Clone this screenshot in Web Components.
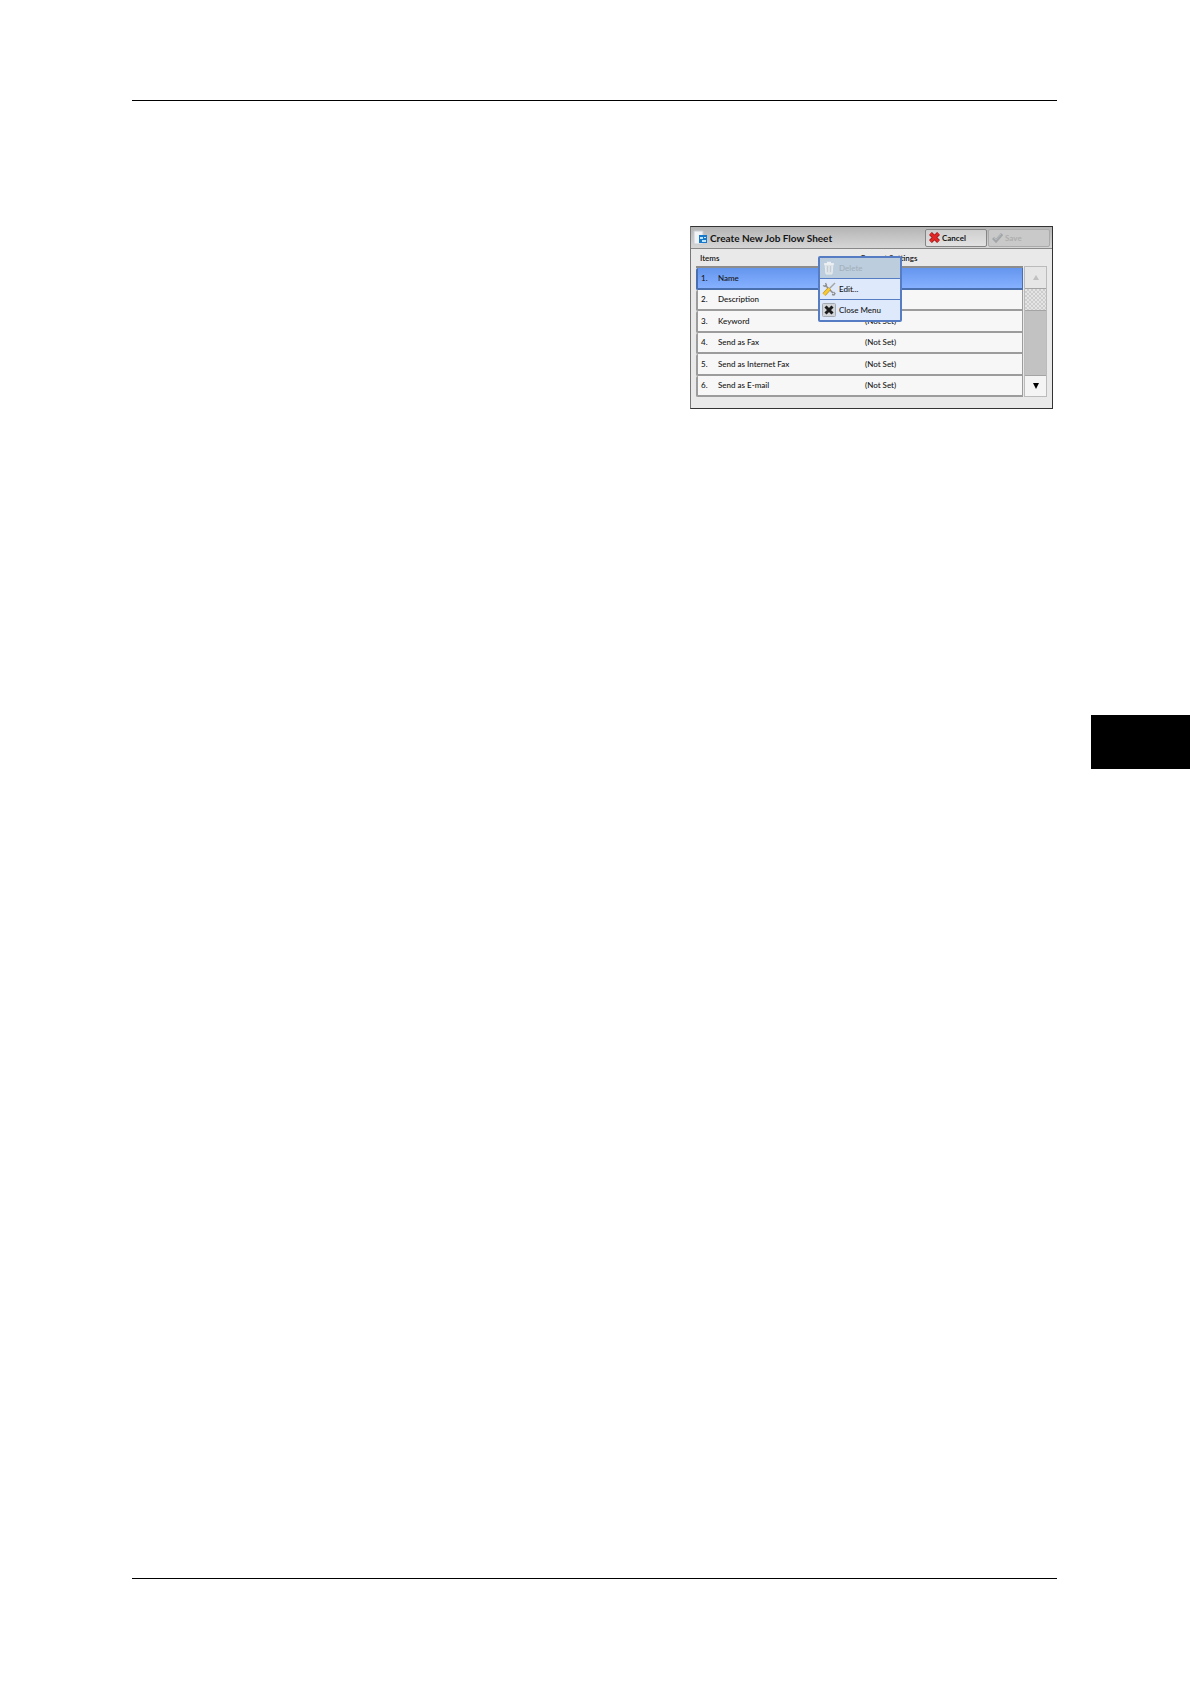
<!DOCTYPE html>
<html lang="en">
<head>
<meta charset="utf-8">
<title>Create New Job Flow Sheet</title>
<style>
body {
  margin: 0;
  background: white;
}
</style>
</head>
<body>
<manual-page>
  <flow-panel heading="Create New Job Flow Sheet">
    <tool-button slot="actions" icon="cancel">Cancel</tool-button>
    <tool-button slot="actions" icon="save" disabled>Save</tool-button>
    <item-list></item-list>
    <scroll-strip></scroll-strip>
    <popup-menu slot="popup"></popup-menu>
  </flow-panel>
</manual-page>

<script>
const icons = {
  sheet: `<svg width="15" height="16" viewBox="0 0 15 16">
    <path d="M1 1h9v13H1z" fill="#f1f3f6" stroke="#c9ced4"/>
    <path d="M6 5h8v8H6z" fill="#1879c9"/>
    <path d="M7 7h3v2H7zM11 7h2v1h-2zM9 10h4v2H9z" fill="#bfe6ff"/>
  </svg>`,
  cancel: `<svg width="11" height="11" viewBox="0 0 11 11">
    <path d="M1.500 1.500l8 8M9.500 1.500l-8 8" stroke="#8d1717" stroke-width="4"/>
    <path d="M1.500 1.500l8 8M9.500 1.500l-8 8" stroke="#e32626" stroke-width="2.800"/>
  </svg>`,
  save: `<svg width="11" height="11" viewBox="0 0 11 11">
    <path d="M1 6l3 3 6-7" fill="none" stroke="#a2a6a8" stroke-width="3"/>
    <path d="M2 6l2 2 5-6" fill="none" stroke="#b9bcbe" stroke-width="1"/>
  </svg>`,
  trash: `<svg width="14" height="14" viewBox="0 0 14 14">
    <path d="M3 3h8l-1 10H4z" fill="#dce2e6" stroke="#e9edef"/>
    <path d="M2 3h10M5 1.500h4" stroke="#eef1f3" stroke-width="1.500"/>
    <path d="M5.500 5v6M8.500 5v6" stroke="#c4ced6"/>
  </svg>`,
  edit: `<svg width="14" height="14" viewBox="0 0 14 14">
    <path d="M3 3l8 8" stroke="#8d8f91" stroke-width="1.600"/>
    <path d="M1 3.500l2 1 1.500-1.500L3.500 1M10 12.500l2 .5 1-1.500-1.500-1.500" fill="none" stroke="#8d8f91" stroke-width="1.300"/>
    <path d="M13 1L7 7" stroke="#a3a5a4" stroke-width="1.500"/>
    <path d="M7.500 6.500L2 12.500" stroke="#b68d16" stroke-width="4"/>
    <path d="M7.500 6.500L2 12.500" stroke="#f5c937" stroke-width="2.600"/>
  </svg>`,
  close: `<svg width="14" height="14" viewBox="0 0 14 14">
    <rect x=".5" y=".5" width="13" height="13" rx="1" fill="#d3d6d9" stroke="#a5abb2"/>
    <path d="M3.500 3.500l7 7M10.500 3.500l-7 7" stroke="#1c1c1c" stroke-width="3"/>
  </svg>`
};

class ManualPage extends HTMLElement {
  constructor() {
    super();
    this.attachShadow({ mode: "open" }).innerHTML = `
<style>
:host {
  display: flex;
  flex-direction: column;
  box-sizing: border-box;
  min-height: 100vh;
  padding: 100px 0 105px;
}
hr {
  align-self: stretch;
  height: 1px;
  margin: 0 133px 0 132px;
  border: 0;
  background: black;
}
.figure {
  display: flex;
  justify-content: flex-end;
  margin: 125px 137px 306px 132px;
}
.tab {
  align-self: flex-end;
  width: 99px;
  height: 54px;
  background: black;
}
.last {
  margin-top: auto;
}
</style>
<hr>
<div class="figure"><slot></slot></div>
<div class="tab"></div>
<hr class="last">`;
  }
}

class FlowPanel extends HTMLElement {
  constructor() {
    super();
    this.attachShadow({ mode: "open" }).innerHTML = `
<style>
:host {
  display: block;
  position: relative;
  box-sizing: border-box;
  width: 363px;
  border: 1px solid #333;
  border-left-color: #777;
  background: #e9e9e9;
  color: #151515;
}
header {
  display: flex;
  align-items: center;
  gap: 1px;
  height: 21px;
  padding: 0 2px;
  border-bottom: 1px solid #888;
  background: linear-gradient(#b4b4b4, #d6d6d6);
}
h1 {
  flex: 1;
  margin: 0 0 0 1px;
  font: bold 10px/14px Lato, sans-serif;
}
.body {
  display: flex;
  align-items: flex-end;
  gap: 1px;
  padding: 0 5px 11px;
}
</style>
<header>${icons.sheet}<h1></h1><slot name="actions"></slot></header>
<div class="body"><slot></slot></div>
<slot name="popup"></slot>`;
    this.shadowRoot.querySelector("h1").textContent = this.getAttribute("heading");
  }
}

class ToolButton extends HTMLElement {
  constructor() {
    super();
    this.attachShadow({ mode: "open" }).innerHTML = `
<style>
:host {
  display: block;
}
button {
  display: flex;
  align-items: center;
  gap: 2px;
  box-sizing: border-box;
  width: 62px;
  height: 18px;
  padding: 0 3px;
  border: 1px solid #858585;
  border-radius: 2px;
  background: linear-gradient(#cfcfcf, #e2e2e2);
  color: #151515;
  font: bold 8px/10px Lato, sans-serif;
}
button:disabled {
  border-color: #aaa;
  background: #c9c9c9;
  color: #aeaeae;
}
</style>
<button type="button">${icons[this.getAttribute("icon")]}<slot></slot></button>`;
    this.shadowRoot.querySelector("button").disabled = this.hasAttribute("disabled");
  }
}

const items = [
  ["Name", ""],
  ["Description", ""],
  ["Keyword", "(Not Set)"],
  ["Send as Fax", "(Not Set)"],
  ["Send as Internet Fax", "(Not Set)"],
  ["Send as E-mail", "(Not Set)"]
];

class ItemList extends HTMLElement {
  constructor() {
    super();
    const rows = items.map(([name, value], i) => `
  <tr${i === 0 ? ' class="selected"' : ""}><td>${i + 1}.</td><td>${name}</td><td>${value}</td></tr>`).join("");
    this.attachShadow({ mode: "open" }).innerHTML = `
<style>
:host {
  display: block;
  flex: 1;
}
table {
  width: 100%;
  height: 148px;
  border-spacing: 0;
  table-layout: fixed;
  font: 500 8px/10px Lato, sans-serif;
}
th, td {
  padding: 0;
  text-align: left;
  white-space: nowrap;
}
th {
  height: 17px;
  border-bottom: 2px solid #8c8c8c;
  font-weight: 600;
}
th:first-child {
  padding-left: 4px;
}
th:last-child {
  padding-left: 2px;
}
.number {
  width: 22px;
}
.name {
  width: 140px;
}
td {
  border-bottom: 2px solid #9c9c9c;
  background: #f7f7f7;
}
td:first-child {
  padding-left: 3px;
  border-left: 2px solid #9c9c9c;
  border-radius: 2px 0 0 2px;
}
td:last-child {
  padding-left: 7px;
  border-right: 1px solid #9c9c9c;
}
.selected td {
  border-color: #4a6fae;
  background: linear-gradient(#6496ee, #86b0ff);
}
</style>
<table>
  <colgroup><col class="number"><col class="name"><col></colgroup>
  <thead><tr><th colspan="2">Items</th><th>Current Settings</th></tr></thead>
  <tbody>${rows}</tbody>
</table>`;
  }
}

class ScrollStrip extends HTMLElement {
  constructor() {
    super();
    this.attachShadow({ mode: "open" }).innerHTML = `
<style>
:host {
  display: flex;
  flex-direction: column;
  box-sizing: border-box;
  width: 23px;
  height: 131px;
  border: 1px solid #bbb;
  background: #c2c2c2;
}
button {
  display: grid;
  place-items: center;
  height: 21px;
  padding: 0;
  border: 0;
  background: #f4f4f4;
}
button:disabled {
  background: #e6e6e6;
}
.thumb {
  height: 21px;
  border: solid #a4a4a4;
  border-width: 1px 0;
  background: repeating-conic-gradient(#cdcdcd 0 25%, #e4e4e4 0 50%) 0 0 / 4px 4px;
}
.down {
  margin-top: auto;
  border-top: 1px solid #a4a4a4;
}
</style>
<button type="button" aria-label="Scroll up" disabled><svg width="6" height="6"><path d="M3 0l3 5H0z" fill="#c0c0c0"/></svg></button>
<div class="thumb"></div>
<button type="button" aria-label="Scroll down" class="down"><svg width="6" height="6"><path d="M0 0h6L3 6z" fill="#000"/></svg></button>`;
  }
}

class PopupMenu extends HTMLElement {
  constructor() {
    super();
    this.attachShadow({ mode: "open" }).innerHTML = `
<style>
:host {
  display: flex;
  flex-direction: column;
  gap: 1px;
  position: absolute;
  top: 29px;
  left: 127px;
  box-sizing: border-box;
  width: 84px;
  padding: 2px;
  border-radius: 2px;
  background: #567cc4;
}
button {
  display: flex;
  align-items: center;
  gap: 3px;
  height: 20px;
  padding: 0 2px;
  border: 0;
  background: #dfe9fc;
  color: #151515;
  font: 500 8px/10px Lato, sans-serif;
}
button:disabled {
  background: #bccddd;
  color: #a3b0bb;
}
</style>
<button type="button" disabled>${icons.trash}Delete</button>
<button type="button">${icons.edit}Edit...</button>
<button type="button">${icons.close}Close Menu</button>`;
  }
}

customElements.define("manual-page", ManualPage);
customElements.define("flow-panel", FlowPanel);
customElements.define("tool-button", ToolButton);
customElements.define("item-list", ItemList);
customElements.define("scroll-strip", ScrollStrip);
customElements.define("popup-menu", PopupMenu);
</script>
</body>
</html>
